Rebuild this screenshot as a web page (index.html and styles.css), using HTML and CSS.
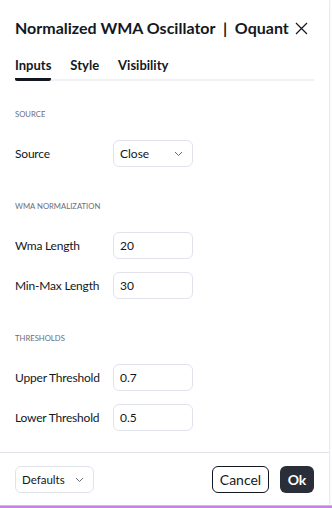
FILE: index.html
```html
<!DOCTYPE html>
<html lang="en">
<head>
    <meta charset="UTF-8">
    <meta name="viewport" content="width=device-width, initial-scale=1.0">
    <title>Normalized WMA Oscillator</title>
    <link rel="stylesheet" href="styles.css">
</head>
<body>
    <div id="dialog">
        <div class="header">
            <h1 class="title">Normalized WMA Oscillator&nbsp; |&nbsp; Oquant</h1>
            <button class="close-btn" aria-label="Close">
                <svg width="13" height="13" viewBox="0 0 13 13">
                    <path d="M1 1 L12 12 M12 1 L1 12" stroke="#131722" stroke-width="1.2" fill="none"/>
                </svg>
            </button>
        </div>

        <div class="tabs">
            <div class="tab active">Inputs</div>
            <div class="tab">Style</div>
            <div class="tab">Visibility</div>
        </div>

        <div class="content">
            <div class="section">
                <div class="section-title">Source</div>
                <div class="row">
                    <label class="row-label">Source</label>
                    <div class="field select">
                        <span>Close</span>
                        <svg class="chevron" width="9" height="6" viewBox="0 0 9 6"><path d="M1 1 L4.5 4.5 L8 1" stroke="#6a6d78" stroke-width="1" fill="none"/></svg>
                    </div>
                </div>
            </div>

            <div class="section">
                <div class="section-title">WMA Normalization</div>
                <div class="row">
                    <label class="row-label">Wma Length</label>
                    <div class="field">20</div>
                </div>
                <div class="row">
                    <label class="row-label">Min-Max Length</label>
                    <div class="field">30</div>
                </div>
            </div>

            <div class="section">
                <div class="section-title">Thresholds</div>
                <div class="row">
                    <label class="row-label">Upper Threshold</label>
                    <div class="field">0.7</div>
                </div>
                <div class="row">
                    <label class="row-label">Lower Threshold</label>
                    <div class="field">0.5</div>
                </div>
            </div>
        </div>

        <div class="footer">
            <div class="field select defaults">
                <span>Defaults</span>
                <svg class="chevron" width="9" height="6" viewBox="0 0 9 6"><path d="M1 1 L4.5 4.5 L8 1" stroke="#6a6d78" stroke-width="1" fill="none"/></svg>
            </div>
            <div class="buttons">
                <button class="btn cancel">Cancel</button>
                <button class="btn ok">Ok</button>
            </div>
        </div>
    </div>
    <div class="chart-strip"></div>
</body>
</html>
```

FILE: styles.css
```css
body {
    font-family: Lato, 'Open Sans', sans-serif;
    margin: 0;
    background-color: #ffffff;
    color: #131722;
}

#dialog {
    width: 329px;
    height: 505px;
    background-color: #ffffff;
    box-shadow: 0 0 2px rgba(0, 0, 0, 0.25);
    display: flex;
    flex-direction: column;
    box-sizing: border-box;
}

.header {
    display: flex;
    align-items: center;
    justify-content: space-between;
    padding: 18px 21px 0 15px;
}

.title {
    margin: 0;
    font-size: 16px;
    line-height: 20px;
    font-weight: 700;
    white-space: nowrap;
}

.close-btn {
    border: none;
    background: none;
    padding: 0;
    width: 13px;
    height: 13px;
    display: flex;
    flex-shrink: 0;
}

.tabs {
    display: flex;
    gap: 19px;
    margin: 17px 15px 0;
    border-bottom: 2px solid #eff1f4;
}

.tab {
    font-size: 13px;
    font-weight: 700;
    line-height: 20px;
    padding-bottom: 3px;
}

.tab.active {
    border-bottom: 3px solid #131722;
    border-radius: 2px;
    margin-bottom: -2px;
}

.content {
    flex: 1;
    padding: 27px 15px 0;
}

.section + .section {
    margin-top: 33px;
}

.section-title {
    font-size: 7.7px;
    line-height: 12px;
    text-transform: uppercase;
    color: #6a6d78;
    margin-bottom: 20px;
}

.row {
    display: flex;
    align-items: center;
    height: 27px;
}

.row + .row {
    margin-top: 13px;
}

.row-label {
    width: 98px;
    flex-shrink: 0;
    font-size: 12px;
    letter-spacing: -0.2px;
}

.field {
    width: 80px;
    height: 27px;
    flex-shrink: 0;
    box-sizing: border-box;
    border: 1px solid #e0e3eb;
    border-radius: 6px;
    padding: 0 6px;
    font-size: 12px;
    display: flex;
    align-items: center;
}

.select {
    justify-content: space-between;
}

.chevron {
    margin-right: 3px;
}

.footer {
    border-top: 1px solid #e0e3eb;
    padding: 13px 15px 12px;
    display: flex;
    justify-content: space-between;
    align-items: center;
}

.defaults {
    width: 79px;
    font-size: 11.5px;
}

.buttons {
    display: flex;
    gap: 11px;
}

.btn {
    font-family: inherit;
    font-size: 14px;
    height: 27px;
    border-radius: 6px;
    padding: 0;
    cursor: pointer;
}

.cancel {
    width: 57px;
    background-color: #ffffff;
    border: 1px solid #131722;
    color: #131722;
}

.ok {
    width: 34px;
    background-color: #2a2e39;
    border: none;
    color: #ffffff;
    font-weight: 700;
}

.chart-strip {
    height: 3px;
    background-color: #c784de;
    border-top: 1px solid #d9b3e8;
}
```
